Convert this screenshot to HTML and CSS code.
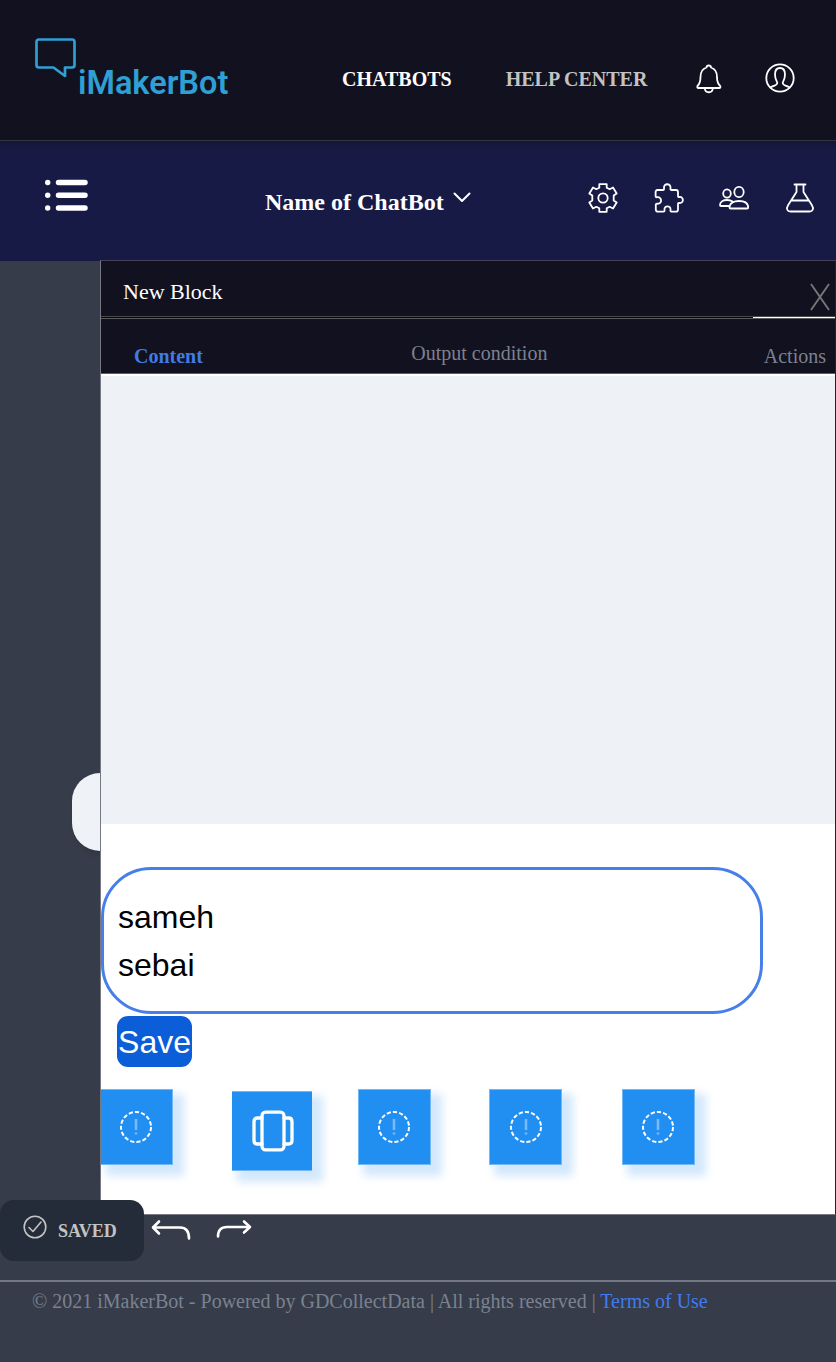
FILE: index.html
```
<!DOCTYPE html>
<html lang="en">
<head>
<meta charset="utf-8">
<title>iMakerBot</title>
<link rel="stylesheet" href="styles.css">
</head>
<body>
<header class="header">
  <a class="logo">
    <svg class="logo-mark" width="42" height="42" viewBox="0 0 42 42"><path d="M4 2.500h33q2.500 0 2.500 2.500v23q0 2.500-2.500 2.500h-7v8.500L18.500 30.500H4Q1.500 30.500 1.500 28V5Q1.500 2.500 4 2.500z"/></svg>
    <span class="logo-text">iMakerBot</span>
  </a>
  <nav class="nav">
    <a class="nav-link active">CHATBOTS</a>
    <a class="nav-link">HELP CENTER</a>
  </nav>
  <svg class="icon bell" width="26" height="30" viewBox="0 0 26 30"><path d="M10.500 3.500Q10.500 1.500 12.700 1.500T15 3.500C20 5 21 9 21 13c0 4 .5 6.500 3.200 9q.7 2-1 2H2.500q-1.700 0-1-2C4 19.500 4.500 17 4.500 13c0-4 1-8 6-9.500zM8.800 24.500c.5 5 7.500 5 8 0"/></svg>
  <svg class="icon user" width="30" height="30" viewBox="0 0 30 30"><circle cx="15" cy="15" r="13.700"/><path d="M5.500 24.500c3-2 6.500-1.700 6.800-4.500.1-1.700-2.300-3-2.300-8.500C10 7 12 5 15 5s5 2 5 6.500c0 5.500-2.400 6.800-2.300 8.500.3 2.800 3.800 2.500 6.800 4.500"/></svg>
</header>

<section class="toolbar">
  <svg class="menu" width="44" height="34" viewBox="0 0 44 34"><path d="M13.500 4.500h26.500M13.500 17.300h26.500M13.500 30h26.500"/><circle cx="2.700" cy="4.500" r="2.700"/><circle cx="2.700" cy="17.300" r="2.700"/><circle cx="2.700" cy="30" r="2.700"/></svg>
  <div class="bot-name">
    <span>Name of ChatBot</span>
    <svg class="chevron" width="18" height="12" viewBox="0 0 18 12"><path d="M1.500 1.500 9 9l7.500-7.500"/></svg>
  </div>
  <div class="tools">
    <svg class="icon" width="30" height="30" viewBox="0 0 30 30"><path d="M11.300 1.200h7.400v3.500l3 1.500L25 4.500l3.700 6-3 2v5l3 2-3.700 6-3.300-1.700-3 1.500v3.500h-7.400v-3.500l-3-1.500L5 25.500l-3.700-6 3-2v-5l-3-2 3.700-6 3.300 1.700 3-1.500z"/><circle cx="15" cy="15" r="4.700"/></svg>
    <svg class="icon" width="30" height="30" viewBox="0 0 30 30"><path d="M3.500 7H9q1.300 0 1-2C9.500 0 17 0 16.500 5q-.3 2 1 2H22q2 0 2 2v4q0 1.300 1.500 1c4.500-.5 4.500 6.500 0 6q-1.500-.3-1.500 1v5.500q0 2.200-2 2.200h-4.500q-1.300 0-1-2c.5-4.500-6.500-4.500-6 0q.3 2-1 2H4q-2.200 0-2.200-2.200V22q0-1.500 1.500-1.300c5 .5 5-7 0-6.500-1.300.2-1.700-.2-1.700-1.500V9Q1.600 7 3.500 7z"/></svg>
    <svg class="icon" width="30" height="30" viewBox="0 0 30 30"><ellipse cx="20" cy="9" rx="4.700" ry="5.200"/><ellipse cx="8" cy="10.500" rx="3.800" ry="4.200"/><path d="M10.500 24.500C10.500 20 15 18 20 18s9.200 2 9.200 6.500q0 1-1 1H11.500q-1 0-1-1zM9.500 23H2q-1 0-1-1c0-3.500 3.500-5 7-5q3.500 0 5.500 1.500"/></svg>
    <svg class="icon" width="30" height="30" viewBox="0 0 30 30"><path d="M9.500 1.500h11M11.500 1.500V9L3.200 22C.7 26 2.500 28.500 5.500 28.500h19c3 0 4.800-2.500 2.300-6.500L18.500 9V1.500M6.300 17.500h17.400"/></svg>
  </div>
</section>

<main class="workspace">
  <aside class="rail"><div class="handle"></div></aside>
  <section class="panel">
    <div class="panel-head">
      <h2 class="panel-title">New Block</h2>
      <svg class="close" width="20" height="28" viewBox="0 0 20 28"><path d="M1 1l18 26M19 1 1 27"/></svg>
    </div>
    <div class="progress"><span class="progress-mark"></span></div>
    <div class="tabs">
      <a class="tab current">Content</a>
      <a class="tab middle">Output condition</a>
      <a class="tab">Actions</a>
    </div>
    <div class="preview"></div>
    <div class="editor">
      <div class="message">sameh<br>sebai</div>
      <button class="save">Save</button>
      <div class="blocks">
        <div class="block first"><svg width="34" height="34" viewBox="0 0 34 34"><circle class="dash" cx="17" cy="17" r="15"/><path class="mark" d="M17 9v11M17 22.500v2"/></svg></div>
        <div class="block gallery"><svg width="42" height="42" viewBox="0 0 42 42"><rect x="10" y="2.200" width="22" height="37.600" rx="3.500"/><path d="M10 8H5.500Q2 8 2 11.500v19Q2 34 5.500 34H10M32 8h4.500Q40 8 40 11.500v19q0 3.500-3.500 3.500H32"/></svg></div>
        <div class="block third"><svg width="34" height="34" viewBox="0 0 34 34"><circle class="dash" cx="17" cy="17" r="15"/><path class="mark" d="M17 9v11M17 22.500v2"/></svg></div>
        <div class="block fourth"><svg width="34" height="34" viewBox="0 0 34 34"><circle class="dash" cx="17" cy="17" r="15"/><path class="mark" d="M17 9v11M17 22.500v2"/></svg></div>
        <div class="block fifth"><svg width="34" height="34" viewBox="0 0 34 34"><circle class="dash" cx="17" cy="17" r="15"/><path class="mark" d="M17 9v11M17 22.500v2"/></svg></div>
      </div>
    </div>
  </section>
  <div class="status">
    <div class="saved">
      <svg width="24" height="24" viewBox="0 0 24 24"><circle cx="12" cy="12" r="10.800"/><path d="m6 12.500 4 4L18 7"/></svg>
      <span>SAVED</span>
    </div>
    <svg class="arrow" width="40" height="22" viewBox="0 0 40 22"><path d="M8 2.500 2 8.500l6 6M2 8.500h27q9 0 9 11"/></svg>
    <svg class="arrow redo" width="36" height="20" viewBox="0 0 36 20"><path d="m28 2.500 6 5.500-6 5.500M34 8H11Q2 8 2 17.500"/></svg>
  </div>
</main>

<footer class="footer">© 2021 iMakerBot - Powered by GDCollectData | All rights reserved | <a class="terms">Terms of Use</a></footer>
</body>
</html>
```

FILE: styles.css
```
* { box-sizing: border-box; }
body {
  margin: 0;
  height: 1362px;
  overflow: hidden;
  background: #363c4a;
  font-family: "Liberation Serif", serif;
  font-size: 20px;
}
svg {
  display: block;
  flex: none;
  fill: none;
  stroke: #fff;
  stroke-width: 2;
  stroke-linecap: round;
  stroke-linejoin: round;
}
.icon { stroke-width: 1.8; }

.header {
  display: flex;
  align-items: flex-start;
  height: 141px;
  background: #12111f;
  border-bottom: 1px solid #34343f;
}
.logo { display: flex; margin: 37px 0 0 35px; width: 307px; }
.logo-mark { stroke: #309fd3; stroke-width: 2.700; }
.logo-text {
  margin: 27px 0 0 1px;
  color: #309fd3;
  font: 600 32.500px/39px Roboto, sans-serif;
}
.nav { display: flex; gap: 54px; margin-top: 68px; width: 355px; white-space: nowrap; }
.nav-link { color: #c4c3c3; font-weight: bold; line-height: 23px; }
.nav-link.active { color: #fff; }
.bell { margin-top: 64px; margin-left: -1px; }
.user { margin: 63px 0 0 43px; }

.toolbar {
  display: flex;
  align-items: flex-start;
  height: 120px;
  background: linear-gradient(#15163a, #171a45 10px);
}
.menu { margin: 37px 0 0 45px; fill: #fff; stroke-width: 5.500; }
.menu circle { stroke: none; }
.bot-name {
  display: flex;
  width: 499px;
  padding: 47px 0 0 176px;
  color: #fff;
  font-size: 24px;
  font-weight: bold;
  line-height: 28px;
  white-space: nowrap;
}
.chevron { margin: 4px 0 0 9px; }
.tools { display: flex; gap: 35.600px; margin-top: 42px; }

.workspace {
  display: grid;
  grid-template-columns: 100px 736px;
  grid-template-rows: 954px 65px;
  height: 1021px;
  border-bottom: 2px solid #737884;
}
.rail { display: flex; padding: 512px 0 0 72px; }
.handle {
  width: 29px;
  height: 78px;
  background: #eff3f7;
  border-radius: 28px 0 0 28px;
  box-shadow: 3px 3px 6px rgba(0, 0, 0, .16);
}
.panel {
  margin-top: -1px;
  background: #fff;
  border: 1px solid #777982;
  border-top-color: #444359;
  border-right-color: #1b2430;
  z-index: 1;
}
.panel-head {
  display: flex;
  justify-content: space-between;
  height: 55px;
  padding: 17px 5px 0 22px;
  background: #12111f;
}
.panel-title { margin: 0; color: #fff; font-size: 22px; font-weight: normal; line-height: 27px; }
.close { margin-top: 5px; stroke: #777; stroke-linecap: butt; stroke-width: 1.900; }
.progress {
  display: flex;
  justify-content: flex-end;
  height: 3px;
  background: #050509;
  border-top: 1px solid #4a4a4d;
  border-bottom: 1px solid #5d5d60;
}
.progress-mark { width: 82px; height: 1px; background: #fff; }
.tabs {
  display: flex;
  justify-content: space-between;
  height: 55px;
  padding: 26px 9px 0 33px;
  background: #12111f;
  border-bottom: 1px solid #665c69;
}
.tab { color: #7b828f; line-height: 23px; }
.tab.current { color: #407be5; font-weight: bold; }
.tab.middle { margin: -3px 0 0 -8px; }
.preview { height: 450px; background: #eef1f6; border-top: 2px solid #fff; }
.editor { padding-top: 43px; }
.message {
  width: 662px;
  height: 147px;
  padding: 23px 14px 0;
  border: 3px solid #467fe8;
  border-radius: 50px;
  color: #000;
  font: 32px/48px "Liberation Sans", sans-serif;
}
.save {
  display: block;
  width: 75px;
  height: 51px;
  margin: 2px 0 0 16px;
  padding: 1px 0 0;
  border: 0;
  border-radius: 11px;
  background: #0b5ed7;
  color: #fff;
  font: 32px/50px "Liberation Sans", sans-serif;
}
.blocks { display: flex; margin-top: 22px; }
.block {
  display: grid;
  place-content: center;
  width: 73px;
  height: 76px;
  background: #218ef1;
  border: 1px solid #72b8f7;
  box-shadow: 8px 8px 8px 3px rgba(33, 142, 241, .2);
}
.block svg { margin: -1px 0 0 -2px; }
.block.first { width: 72px; border-left: 0; }
.block.gallery { width: 80px; height: 80px; margin: 2px 0 0 59px; border-width: 1px 0; }
.block.gallery svg { margin: 0 0 0 1px; stroke-width: 3.300; }
.block.third { margin-left: 46px; }
.block.fourth { margin-left: 58px; }
.block.fourth svg { margin-left: 0; }
.block.fifth { margin-left: 60px; }
.dash { stroke-dasharray: 4.200 2.080; stroke-linecap: butt; }
.mark { stroke: #77baf6; stroke-linecap: butt; stroke-width: 2.600; }

.status { display: flex; grid-column: 1 / 3; margin-top: -15px; z-index: 2; height: 61px; }
.saved {
  display: flex;
  width: 144px;
  height: 61px;
  padding: 15px 0 0 23px;
  background: #252c39;
  border-radius: 14px;
  color: #c4c3c3;
  font-size: 18px;
  font-weight: bold;
}
.saved svg { stroke: #c4c3c3; stroke-width: 1.600; }
.saved span { margin: 5px 0 0 11px; line-height: 23px; }
.arrow { margin: 19px 0 0 7px; stroke-width: 2.600; }
.arrow.redo { margin: 19px 0 0 25px; }

.footer { padding: 8px 0 0 32px; color: #7b828f; line-height: 23px; white-space: nowrap; }
.terms { color: #407bf0; }
```
